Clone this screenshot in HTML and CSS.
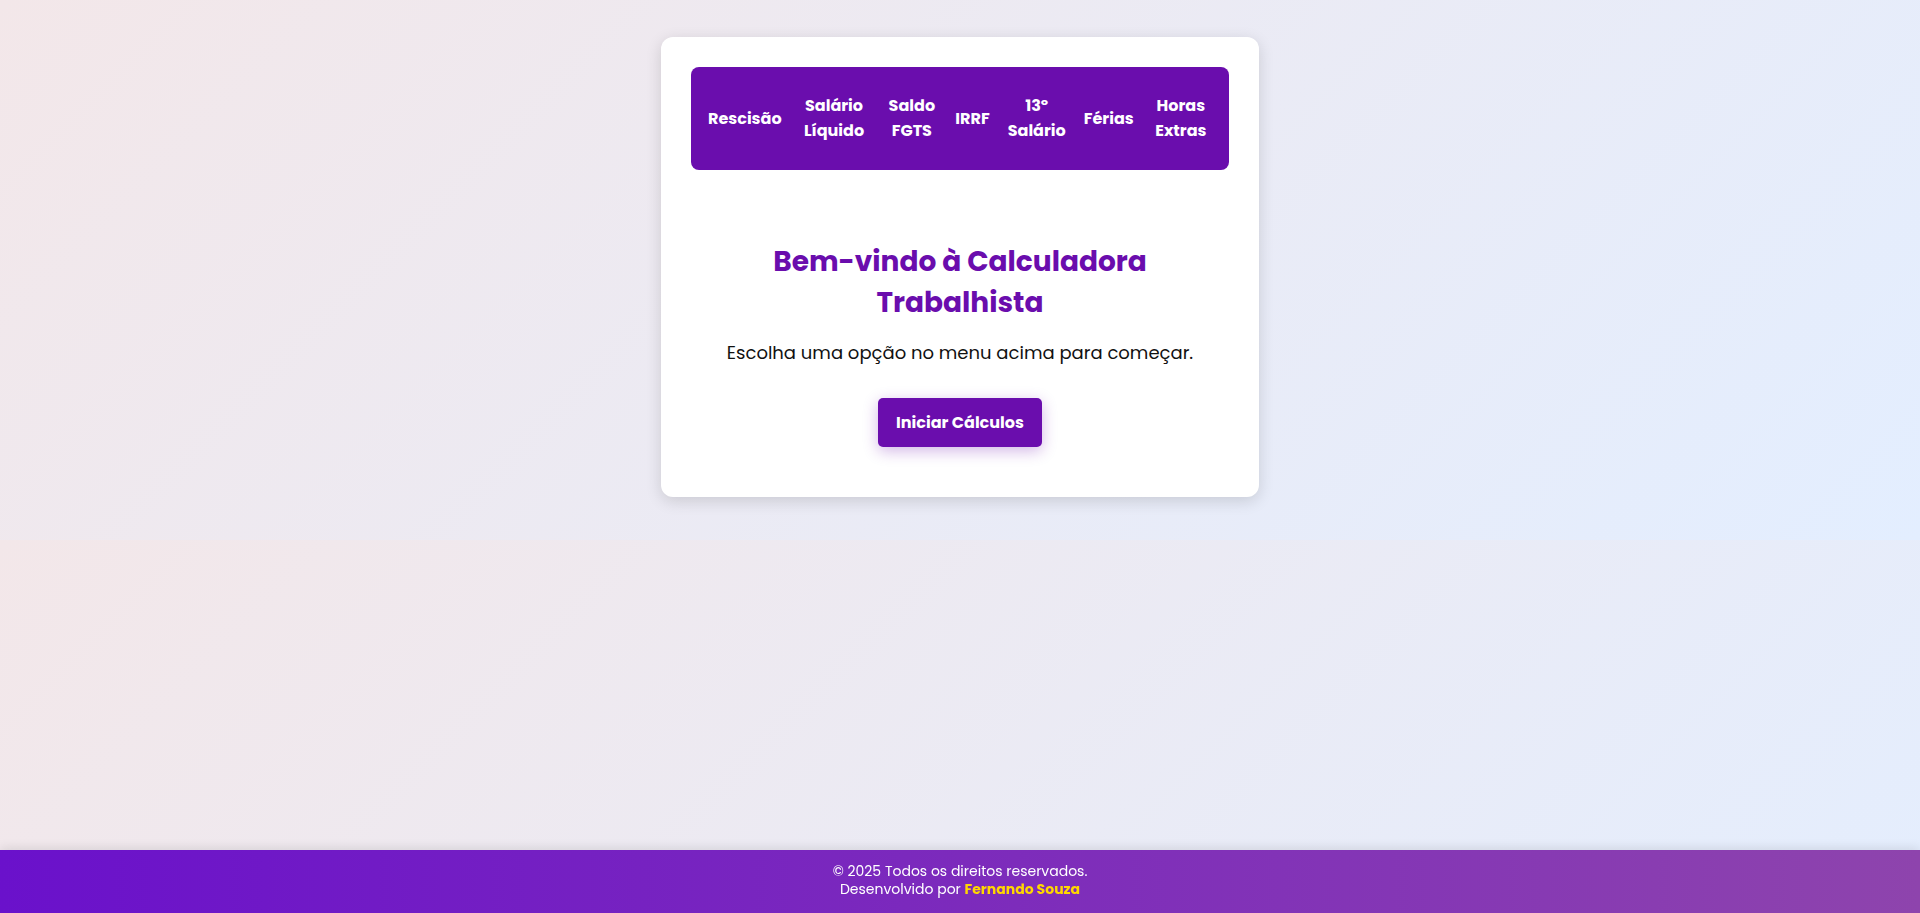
FILE: index.html
```html
<!DOCTYPE html>
<html lang="pt-BR">
<head>
<meta charset="UTF-8">
<title>Calculadora Trabalhista</title>
<link rel="stylesheet" href="styles.css">
</head>
<body>
<main class="page">
  <div class="card">
    <nav class="menu">
      <a class="menu-item" href="#">Rescisão</a>
      <a class="menu-item" href="#">Salário Líquido</a>
      <a class="menu-item" href="#">Saldo FGTS</a>
      <a class="menu-item" href="#">IRRF</a>
      <a class="menu-item" href="#">13º Salário</a>
      <a class="menu-item" href="#">Férias</a>
      <a class="menu-item" href="#">Horas Extras</a>
    </nav>
    <section class="welcome">
      <h2 class="welcome-title">Bem-vindo à Calculadora Trabalhista</h2>
      <p class="welcome-text">Escolha uma opção no menu acima para começar.</p>
      <button class="start-btn" type="button">Iniciar Cálculos</button>
    </section>
  </div>
</main>
<footer class="footer">
  <p class="footer-line">© 2025 Todos os direitos reservados.</p>
  <p class="footer-line">Desenvolvido por <span class="author">Fernando Souza</span></p>
</footer>
</body>
</html>
```
FILE: styles.css
```css
* {
  box-sizing: border-box;
}

html {
  margin: 0;
}

body {
  margin: 0;
  font-family: "Poppins", "Inter", "Noto Sans", sans-serif;
  background: linear-gradient(135deg, #f3e7e9 0%, #e3eeff 100%);
  color: #222;
}

.page {
  padding: 37px 20px 43px;
}

.card {
  width: 598px;
  margin: 0 auto;
  background: #fff;
  border-radius: 12px;
  box-shadow: 0 4px 16px rgba(0, 0, 0, 0.14);
  padding: 30px 30px 50px;
}

.menu {
  display: flex;
  align-items: center;
  background: #6a0dad;
  border-radius: 8px;
  padding: 26px 10px 27px 8px;
}

.menu-item {
  color: #fff;
  text-decoration: none;
  font-weight: 700;
  font-size: 16px;
  line-height: 25px;
  text-align: center;
  padding: 0 9px;
}

.welcome {
  text-align: center;
  padding-top: 71px;
}

.welcome-title {
  margin: 0;
  color: #6a0dad;
  font-size: 28px;
  font-weight: 700;
  line-height: 41px;
}

.welcome-text {
  margin: 16px 0 0;
  font-size: 18px;
  line-height: 27px;
  color: #111;
}

.start-btn {
  margin-top: 32px;
  background: #6a0dad;
  color: #fff;
  border: none;
  border-radius: 5px;
  font-family: inherit;
  font-size: 16px;
  font-weight: 700;
  line-height: 25px;
  padding: 12px 18px;
  white-space: nowrap;
  box-shadow: 0 4px 15px rgba(106, 13, 173, 0.3);
  cursor: pointer;
}

.footer {
  position: fixed;
  left: 0;
  right: 0;
  bottom: 0;
  height: 63px;
  padding-top: 13px;
  text-align: center;
  color: #fff;
  background: linear-gradient(to right, #6a11cb, #8e44ad);
  box-shadow: 0 -2px 10px rgba(0, 0, 0, 0.1);
}

.footer-line {
  margin: 0;
  font-size: 14px;
  line-height: 17.5px;
}

.author {
  color: #ffd700;
  font-weight: 700;
}
```
